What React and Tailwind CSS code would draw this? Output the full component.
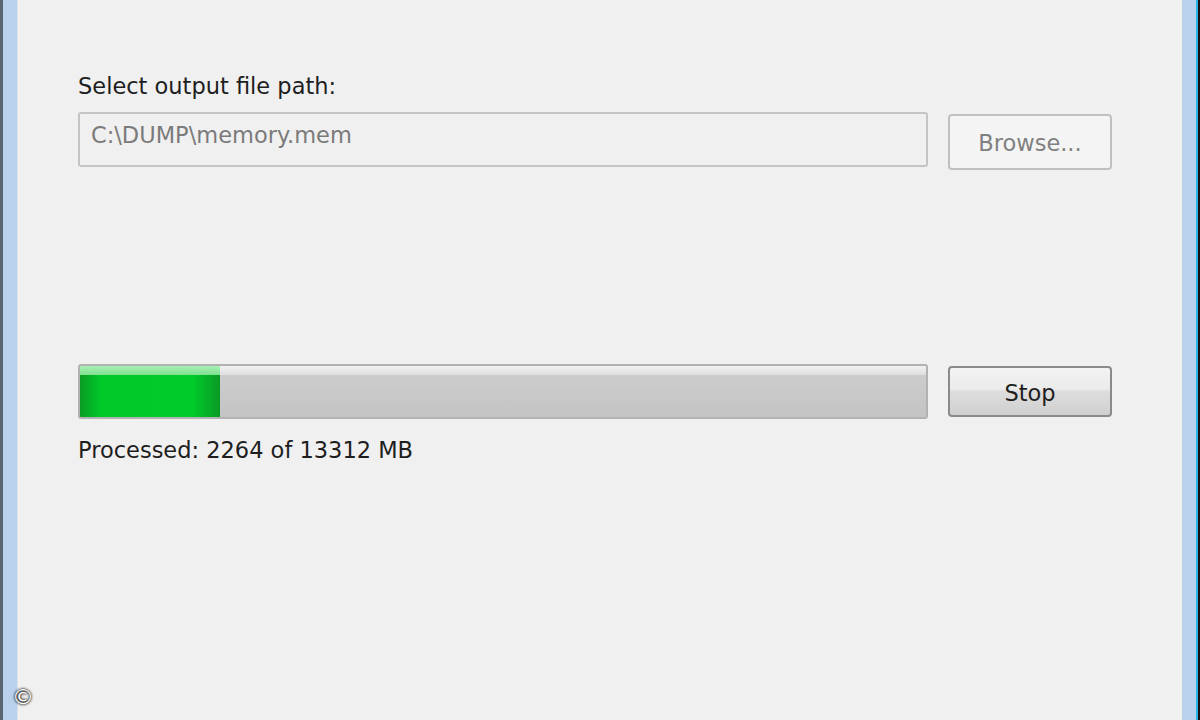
import React from "react";

const font = { fontFamily: '"DejaVu Sans", "Noto Sans", sans-serif' };

export default function App() {
  return (
    <div className="w-[1200px] h-[720px] flex bg-[#f0f0f0] overflow-hidden relative" style={font}>
      <div className="w-[3px] bg-[#5a6470]" />
      <div className="w-[14px] bg-[#b9d1ea]" />
      <div className="w-[1px] bg-[#dae3ee]" />
      <div className="flex-1 bg-[#f0f0f0] flex flex-col pl-[60px] pr-[70px]">
        <div className="h-[71px]" />
        <div className="text-[22.5px] leading-[30px] text-[#1e1e1e]">Select output file path:</div>
        <div className="mt-[11px] flex items-start gap-[20px]">
          <div className="w-[850px] h-[55px] border-2 border-[#c4c4c4] rounded-[3px] bg-[#f0f0f0] px-[11px] pt-[5px] text-[22.5px] text-[#7b7b7b]">
            C:\DUMP\memory.mem
          </div>
          <div className="mt-[2px] w-[164px] h-[56px] border-2 border-[#c0c0c0] rounded-[4px] bg-[#f4f4f4] flex items-center justify-center pt-[3px] text-[22.5px] text-[#808080]">
            Browse...
          </div>
        </div>
        <div className="h-[194px]" />
        <div className="flex items-start gap-[20px]">
          <div className="w-[850px] h-[55px] border-2 border-[#b2b2b2] rounded-[3px] bg-[#c8c8c8] flex overflow-hidden">
            <div className="w-[140px] h-full flex flex-col">
              <div className="h-[9px] bg-[linear-gradient(to_bottom,#a8f0b4,#7ee090)]" />
              <div className="flex-1 bg-[linear-gradient(to_right,#0a9a24,#00c92a_15%,#00cc2b_80%,#0a9a24)]" />
            </div>
            <div className="flex-1 flex flex-col">
              <div className="h-[9px] bg-[linear-gradient(to_bottom,#f2f2f2,#dedede)]" />
              <div className="flex-1 bg-[linear-gradient(to_bottom,#cccccc,#c4c4c4)]" />
            </div>
          </div>
          <div className="mt-[2px] w-[164px] h-[51px] border-2 border-[#8a8a8a] rounded-[4px] bg-[linear-gradient(to_bottom,#f3f3f3_0%,#ebebeb_45%,#dddddd_50%,#d0d0d0_100%)] flex items-center justify-center pt-[4px] text-[22.5px] text-[#1e1e1e]">
            Stop
          </div>
        </div>
        <div className="mt-[16px] text-[22.5px] leading-[30px] text-[#1e1e1e]">Processed: 2264 of 13312 MB</div>
      </div>
      <div className="w-[14px] bg-[#b9d1ea]" />
      <div className="w-[2px] bg-[#2ab3e6]" />
      <div className="w-[2px] bg-[#101010]" />
      <div className="absolute left-[12px] top-[685px] text-[22px] leading-[24px] text-white [text-shadow:0_0_3px_#000,0_0_2px_#000]">©</div>
    </div>
  );
}
